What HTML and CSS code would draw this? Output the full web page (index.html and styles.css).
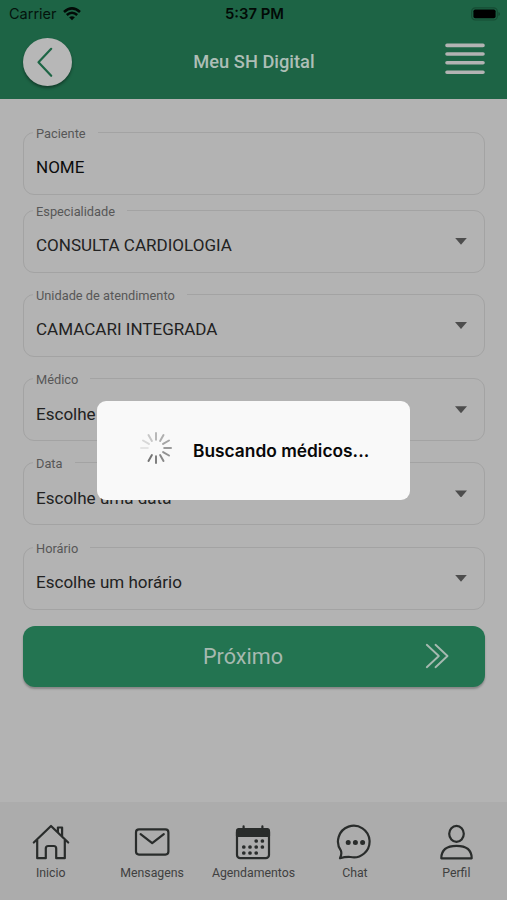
FILE: index.html
```html
<!DOCTYPE html>
<html lang="pt-BR">
<head>
<meta charset="utf-8">
<meta name="viewport" content="width=device-width, initial-scale=1">
<title>Meu SH Digital</title>
<link rel="stylesheet" href="styles.css">
</head>
<body>
<div class="screen">
  <header class="header">
    <div class="status">
      <div class="carrier"><span>Carrier</span>
        <svg width="18" height="14" viewBox="0 0 18 14" fill="none" stroke="#020a06" stroke-width="2.6"><path d="M1 4.9Q9-2.1 17 4.9"/><path d="M3.8 8Q9 3.5 14.2 8"/><path d="M9 13.2 6.1 10.3Q9 8 11.9 10.3Z" fill="#020a06" stroke="none"/></svg>
      </div>
      <span class="time">5:37 PM</span>
      <svg class="battery" width="29" height="14" viewBox="0 0 29 14"><rect x=".7" y=".8" width="25.6" height="12.2" rx="3.6" fill="none" stroke="#164c34" stroke-width="1.2"/><rect x="2.4" y="2.5" width="22.2" height="8.8" rx="1.8" fill="#000"/><path d="M27.5 5v4q1.3-.6 1.3-2t-1.3-2" fill="#12432d"/></svg>
    </div>
    <div class="titlebar">
      <button class="back" aria-label="Voltar"><svg width="48" height="48" viewBox="0 0 48 48" fill="none" stroke="#1d6545" stroke-width="2.2" stroke-linecap="round" stroke-linejoin="round"><path d="M28.2 10.8 15.5 24.3 28.2 37.8"/></svg></button>
      <h1>Meu SH Digital</h1>
      <button class="menu" aria-label="Menu"><svg width="40" height="32" viewBox="0 0 40 32" stroke="#b3b3b3" stroke-width="3.6" stroke-linecap="round"><path d="M2 2.4h36M2 11h36M2 19.7h36M2 29.2h36"/></svg></button>
    </div>
  </header>
  <main class="form">
    <div class="field filled"><label>Paciente</label><span>NOME</span></div>
    <div class="field"><label>Especialidade</label><span>CONSULTA CARDIOLOGIA</span><i class="caret"></i></div>
    <div class="field"><label>Unidade de atendimento</label><span>CAMACARI INTEGRADA</span><i class="caret"></i></div>
    <div class="field"><label>Médico</label><span>Escolhe um médico</span><i class="caret"></i></div>
    <div class="field"><label>Data</label><span>Escolhe uma data</span><i class="caret"></i></div>
    <div class="field"><label>Horário</label><span>Escolhe um horário</span><i class="caret"></i></div>
    <button class="next"><span>Próximo</span><svg width="24" height="26" viewBox="0 0 24 26" fill="none" stroke="#a6b9b0" stroke-width="1.9" stroke-linecap="round" stroke-linejoin="round"><path d="M1.8 1.8 13.8 13 1.8 24.2M10.5 1.8 22.5 13 10.5 24.2"/></svg></button>
  </main>
  <nav class="tabs">
    <a><svg width="38" height="38" viewBox="0 0 38 38"><path d="M1.8 18.5 19 2 36.2 18.5M5.2 16v18.2h8.6V24.5q0-2.5 2.5-2.5h5.4q2.5 0 2.5 2.5v9.7h8.6V16M25.9 8V3.5h4.2V12"/></svg><span>Inicio</span></a>
    <a><svg width="38" height="38" viewBox="0 0 38 38"><rect x="3" y="5.4" width="32.4" height="25.2" rx="3"/><path d="m7.6 10.1 11.6 9 11.6-9"/></svg><span>Mensagens</span></a>
    <a><svg width="38" height="38" viewBox="0 0 38 38"><rect x="3" y="5" width="32" height="29.2" rx="3.2"/><path d="M3 12V7q0-2 2-2h28q2 0 2 2v5ZM9.6 2.4v4M28.4 2.4v4" fill="#292c2b"/><path class="dots" d="M22.2 17h.01M28.4 17h.01M9.8 23h.01M16 23h.01M22.2 23h.01M28.4 23h.01M9.8 29h.01M16 29h.01M22.2 29h.01"/></svg><span>Agendamentos</span></a>
    <a><svg width="38" height="38" viewBox="0 0 38 38"><path d="M4.9 26.7A15.8 15.8 0 1 1 14.5 33Q9.5 32.6 4 34.3 6.1 30 4.9 26.7Z"/><path class="big dots" d="M12.2 18.5h.01M19.4 18.5h.01M26.6 18.5h.01"/></svg><span>Chat</span></a>
    <a><svg width="38" height="38" viewBox="0 0 38 38"><ellipse cx="19.5" cy="9.8" rx="7.3" ry="8"/><path d="M4.3 34.3Q4.3 21.8 19.5 21.8T34.7 34.3Z"/></svg><span>Perfil</span></a>
  </nav>
  <div class="dialog" role="alertdialog">
    <svg width="34" height="34" viewBox="-17 -17 34 34" stroke-width="2" stroke-linecap="round"><path d="M0-8.2V-15" stroke="#b8b8b8"/><path d="M0-8.2V-15" transform="rotate(30)" stroke="#afafaf"/><path d="M0-8.2V-15" transform="rotate(60)" stroke="#a5a5a5"/><path d="M0-8.2V-15" transform="rotate(90)" stroke="#9b9b9b"/><path d="M0-8.2V-15" transform="rotate(120)" stroke="#929292"/><path d="M0-8.2V-15" transform="rotate(150)" stroke="#898989"/><path d="M0-8.2V-15" transform="rotate(180)" stroke="#7f7f7f"/><path d="M0-8.2V-15" transform="rotate(210)" stroke="#757575"/><path d="M0-8.2V-15" transform="rotate(270)" stroke="#e4e4e4"/><path d="M0-8.2V-15" transform="rotate(300)" stroke="#d8d8d8"/><path d="M0-8.2V-15" transform="rotate(330)" stroke="#c8c8c8"/></svg>
    <strong>Buscando médicos...</strong>
  </div>
</div>
</body>
</html>
```
FILE: styles.css
```css
* { box-sizing: border-box; }
body { margin: 0; background: #b3b3b3; font-family: Roboto, sans-serif; }
button { border: 0; padding: 0; font: inherit; }
svg { display: block; flex: none; }
.screen { position: relative; width: 507px; height: 900px; display: flex; flex-direction: column; overflow: hidden; background: #b3b3b3; }
.header { height: 98.5px; background: #1d6445; flex: none; }
.status { height: 28px; padding: 0 7px 0 9px; display: grid; grid-template-columns: 1fr auto 1fr; align-items: center; font: 14.5px/28px Inter, sans-serif; color: #04130c; }
.carrier { display: flex; align-items: center; gap: 6px; }
.time { font-weight: 600; font-size: 14.8px; color: #020a06; }
.battery { justify-self: end; }
.titlebar { height: 70px; padding: 0 22px 3px 23px; display: grid; grid-template-columns: 1fr auto 1fr; align-items: center; }
.back { width: 49px; height: 48px; border-radius: 50%; background: #b7b7b7; box-shadow: 0 2px 3px rgba(0,0,0,.4); }
.titlebar h1 { margin: 0; font-size: 18.3px; font-weight: 500; color: #adbeb6; }
.menu { justify-self: end; background: none; margin-top: -5px; }
.form { flex: 1; padding: 33px 22px 0 23px; }
.field { position: relative; height: 63px; margin-bottom: 21.25px; padding: 8px 17px 0 12px; border: 1px solid #a3a3a3; border-radius: 11px; display: flex; align-items: center; justify-content: space-between; font-size: 17.05px; color: #222; }
.field.filled { margin-bottom: 15.2px; color: #0c0c0c; }
.field label { position: absolute; left: 9px; top: -8px; padding: 0 12px 0 3px; background: #b3b3b3; font-size: 12.8px; line-height: 18px; color: #575757; white-space: nowrap; }
.caret { width: 12px; height: 7px; margin-top: -8px; background: #4d4d4d; clip-path: polygon(0 0, 100% 0, 50% 100%); }
.next { width: 100%; height: 61px; margin-top: -4.5px; padding: 0 36px 0 14px; display: grid; grid-template-columns: 1fr auto 1fr; align-items: center; border-radius: 12px; background: #237451; box-shadow: 0 2px 2px rgba(0,0,0,.25); color: #a6b9b0; font-size: 21.6px; }
.next span { grid-column: 2; }
.next svg { justify-self: end; margin-top: -2px; }
.tabs { height: 98.5px; flex: none; padding-top: 22.5px; background: #acacac; display: grid; grid-template-columns: repeat(5, 1fr); }
.tabs a { display: flex; flex-direction: column; align-items: center; font-size: 12.3px; line-height: 16px; color: #404040; }
.tabs svg { margin-bottom: 3px; fill: none; stroke: #292c2b; stroke-width: 2.2; stroke-linecap: round; stroke-linejoin: round; }
.tabs .dots { stroke-width: 3.7; }
.tabs .big { stroke-width: 5; }
.dialog { position: absolute; left: 97px; top: 401px; width: 313px; height: 99px; padding: 0 0 6px 42px; display: flex; align-items: center; gap: 20px; border-radius: 9px; background: #f9f9f9; color: #080808; }
.dialog strong { margin-top: 7px; font: 600 17.35px/22px Inter, sans-serif; }
```
